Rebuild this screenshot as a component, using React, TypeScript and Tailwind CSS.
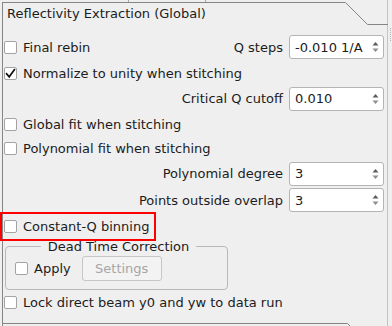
import React from "react";

function Check({ checked = false }: { checked?: boolean }) {
  return (
    <div className="w-[13px] h-[13px] shrink-0 bg-white border border-[#a3a3a3] rounded-[2px] flex items-center justify-center">
      {checked && (
        <svg width="11" height="11" viewBox="0 0 11 11">
          <path d="M1.6 5.8 L4.2 8.8 L9.4 1.6" fill="none" stroke="#111" strokeWidth="1.7" strokeLinecap="square" strokeLinejoin="miter" />
        </svg>
      )}
    </div>
  );
}

function CheckRow({ label, checked = false }: { label: string; checked?: boolean }) {
  return (
    <div className="flex items-center gap-[6px]">
      <Check checked={checked} />
      <span className="whitespace-nowrap leading-none">{label}</span>
    </div>
  );
}

function Spin({ value }: { value: string }) {
  return (
    <div className="w-[95px] h-[24px] shrink-0 bg-white border border-[#b4b4b4] rounded-[3px] flex items-center">
      <span className="flex-1 pl-[5px] leading-none whitespace-nowrap">{value}</span>
      <svg width="9" height="14" viewBox="0 0 9 14" className="mr-[3px]">
        <path d="M1.5 5.5 L4.5 2 L7.5 5.5 Z" fill="#5c5c5c" />
        <path d="M1.5 8.5 L4.5 12 L7.5 8.5 Z" fill="#8e8e8e" />
      </svg>
    </div>
  );
}

function LabeledSpin({ label, value }: { label: string; value: string }) {
  return (
    <div className="flex items-center gap-[6px]">
      <span className="whitespace-nowrap leading-none">{label}</span>
      <Spin value={value} />
    </div>
  );
}

export default function App() {
  return (
    <div className="w-[392px] h-[326px] bg-[#efefef] flex overflow-hidden relative font-['DejaVu_Sans',sans-serif] text-[13px] text-[#1c1c1c]">
      {/* main column */}
      <div className="w-[388px] h-full border-r border-[#c4c4c4] flex flex-col">
        {/* top strip remnants */}
        <div className="h-[2px] flex shrink-0">
          <div className="w-[128px]" />
          <div className="w-px bg-[#a8a8a8]" />
          <div className="w-[76px]" />
          <div className="w-px bg-[#a8a8a8]" />
        </div>
        <div className="pl-[2px] flex-1 flex flex-col">
          <div className="border-l border-[#858585] flex-1 flex flex-col">
            {/* header tab */}
            <div className="h-[23px] relative flex items-center pl-[4px] shrink-0">
              <svg className="absolute top-0 left-[-1px]" width="386" height="23" viewBox="0 0 386 23">
                <path d="M0 0.5 H343.5 L365.5 22.5 H386" fill="none" stroke="#858585" strokeWidth="1" />
              </svg>
              <span className="whitespace-nowrap leading-none relative">Reflectivity Extraction (Global)</span>
            </div>

            {/* content */}
            <div className="h-[298px] flex flex-col pt-[9px] pl-[1px] pr-[3px] shrink-0">
              <div className="h-[26px] flex items-center justify-between">
                <CheckRow label="Final rebin" />
                <LabeledSpin label="Q steps" value="-0.010 1/A" />
              </div>
              <div className="h-[26px] flex items-center">
                <CheckRow label="Normalize to unity when stitching" checked />
              </div>
              <div className="h-[25px] flex items-center justify-end">
                <LabeledSpin label="Critical Q cutoff" value="0.010" />
              </div>
              <div className="h-[26px] flex items-center">
                <CheckRow label="Global fit when stitching" />
              </div>
              <div className="h-[23px] flex items-center">
                <CheckRow label="Polynomial fit when stitching" />
              </div>
              <div className="h-[27px] flex items-center justify-end">
                <LabeledSpin label="Polynomial degree" value="3" />
              </div>
              <div className="h-[26px] flex items-center justify-end">
                <LabeledSpin label="Points outside overlap" value="3" />
              </div>
              <div className="h-[26px] flex items-center">
                <CheckRow label="Constant-Q binning" />
              </div>

              {/* group box */}
              <div className="mt-[7px] ml-[1px] w-[223px] h-[44px] relative border border-[#b9b9b9] rounded-[4px] flex items-center pl-[9px]">
                <div className="absolute left-[35px] top-[-8px] w-[155px] h-[15px] bg-[#efefef] flex items-center justify-center">
                  <span className="whitespace-nowrap leading-none">Dead Time Correction</span>
                </div>
                <CheckRow label="Apply" />
                <div className="ml-[11px] w-[80px] h-[25px] border border-[#c6c6c6] rounded-[3px] bg-[#f3f3f3] flex items-center justify-center text-[#a6a6a6]">
                  <span className="leading-none">Settings</span>
                </div>
              </div>

              <div className="h-[25px] flex items-center">
                <CheckRow label="Lock direct beam y0 and yw to data run" />
              </div>
            </div>

            {/* next tab top edge */}
            <div className="h-[3px] relative shrink-0">
              <svg className="absolute top-0 left-[-1px]" width="386" height="3" viewBox="0 0 386 3">
                <path d="M0 0.5 H345.5 L348.5 3.5" fill="none" stroke="#858585" strokeWidth="1" />
              </svg>
            </div>
          </div>
        </div>
      </div>

      {/* splitter handle */}
      <div className="w-[4px] flex flex-col items-center pt-[28px] gap-[1px]">
        <div className="w-px h-px bg-[#b0b0b0]" />
        <div className="w-px h-px bg-[#b0b0b0]" />
        <div className="w-px h-px bg-[#b0b0b0]" />
        <div className="w-px h-px bg-[#b0b0b0]" />
        <div className="w-px h-px bg-[#b0b0b0]" />
        <div className="w-px h-px bg-[#b0b0b0]" />
        <div className="w-px h-px bg-[#b0b0b0]" />
      </div>

      {/* red highlight annotation */}
      <div className="absolute left-0 top-[212px] w-[156px] h-[29px] border-2 border-[#ff0000] pointer-events-none" />
    </div>
  );
}
